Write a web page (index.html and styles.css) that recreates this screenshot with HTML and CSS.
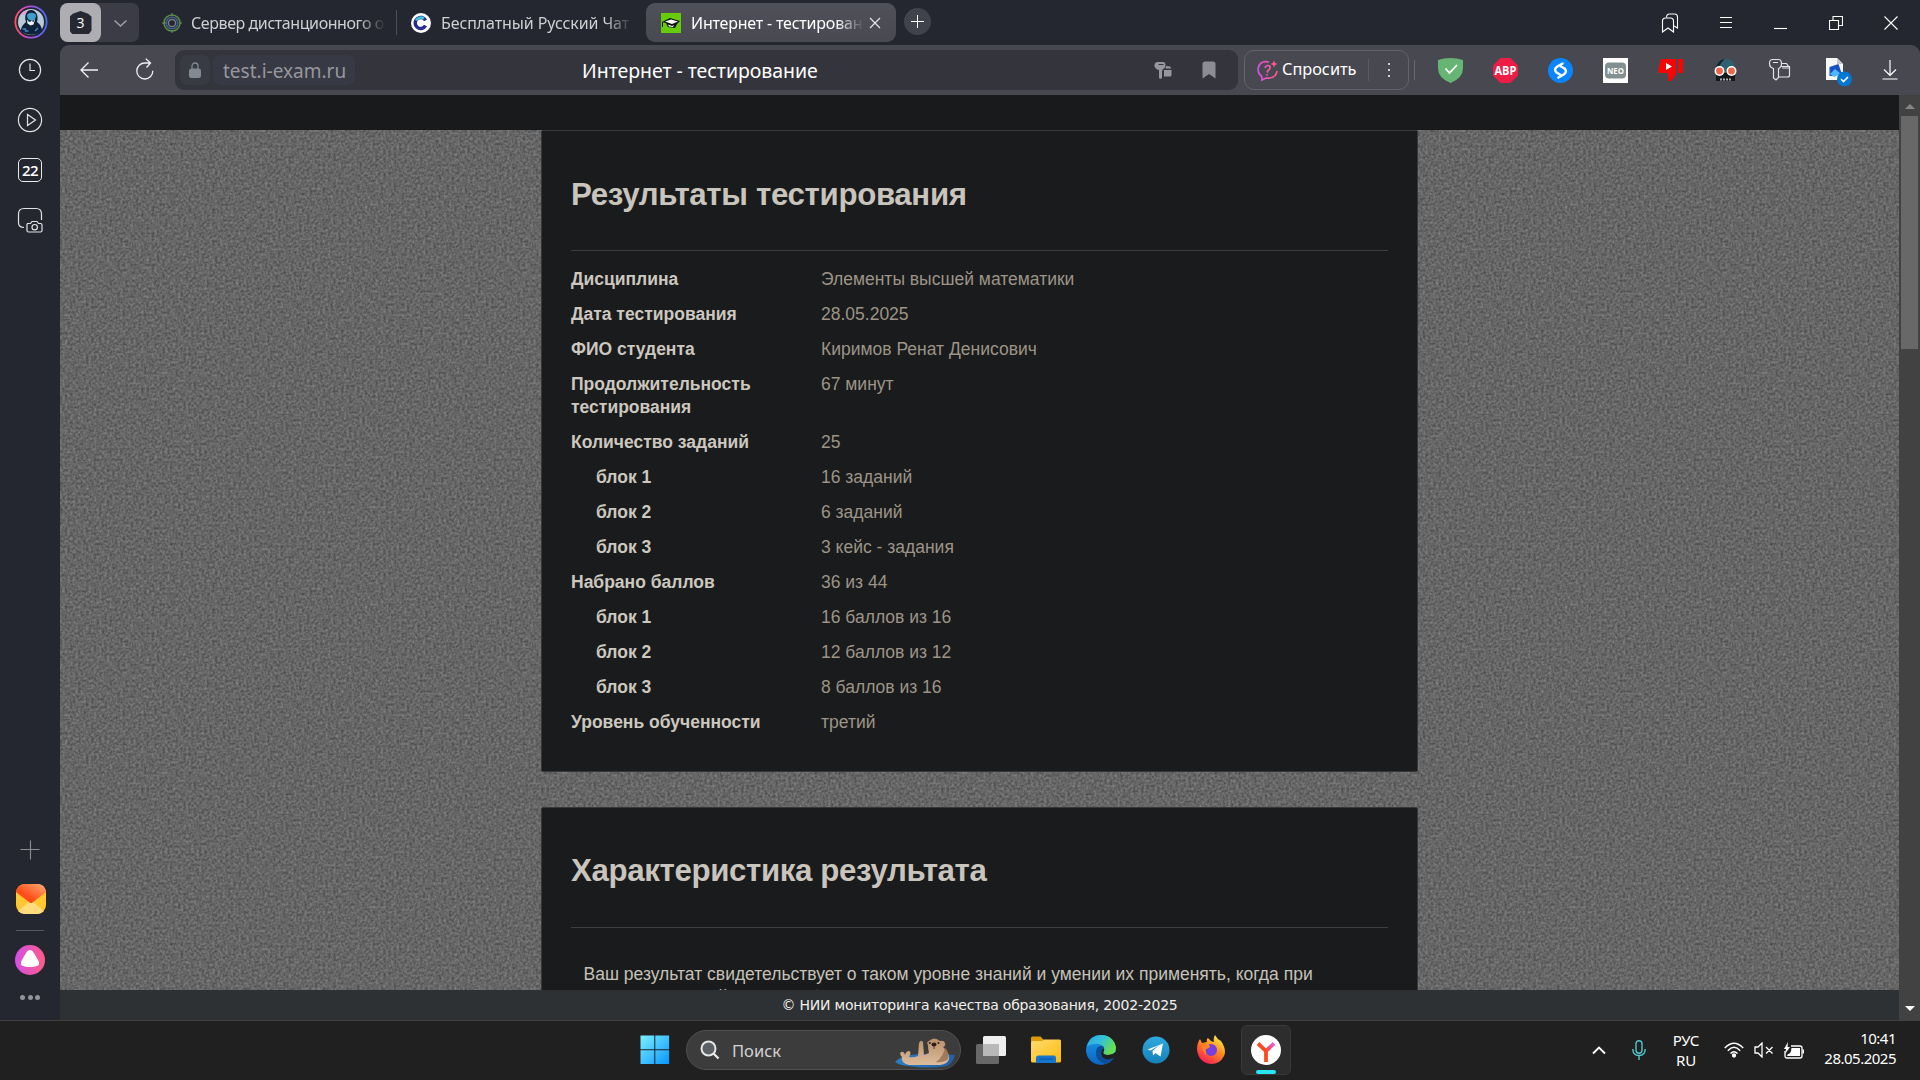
FILE: index.html
```html
<!DOCTYPE html>
<html lang="ru">
<head>
<meta charset="utf-8">
<title>Интернет - тестирование</title>
<link rel="stylesheet" href="styles.css">
</head>
<body>
<svg class="defs" width="0" height="0"><defs>
<linearGradient id="ring" x1="0" y1="0" x2="1" y2="0"><stop offset="0" stop-color="#ff5263"/><stop offset=".4" stop-color="#c04bd8"/><stop offset="1" stop-color="#416dff"/></linearGradient>
<linearGradient id="pink" x1="0" y1="0" x2="1" y2="0"><stop offset="0" stop-color="#d44fe8"/><stop offset="1" stop-color="#ff5c86"/></linearGradient>
<linearGradient id="mail" x1="0" y1="1" x2="1" y2="0"><stop offset=".35" stop-color="#ff4b18"/><stop offset="1" stop-color="#ffad74"/></linearGradient>
<linearGradient id="win" x1="0" y1="0" x2="1" y2="1"><stop offset="0" stop-color="#7cf0ff"/><stop offset="1" stop-color="#0795ff"/></linearGradient>
<linearGradient id="folder" x1="0" y1="0" x2="1" y2="1"><stop offset="0" stop-color="#ffdc70"/><stop offset="1" stop-color="#fcb90d"/></linearGradient>
<linearGradient id="edge" x1="0" y1="0" x2="1" y2=".5"><stop offset="0" stop-color="#2aa5e8"/><stop offset=".5" stop-color="#35c1d8"/><stop offset="1" stop-color="#67e04a"/></linearGradient>
<linearGradient id="edge2" x1="0" y1="0" x2="0" y2="1"><stop offset="0" stop-color="#1b9de2"/><stop offset="1" stop-color="#0b63c5"/></linearGradient>
<linearGradient id="tg" x1="0" y1="0" x2="0" y2="1"><stop offset="0" stop-color="#2fa9df"/><stop offset="1" stop-color="#1581b9"/></linearGradient>
<linearGradient id="fox" x1=".8" y1="0" x2=".2" y2="1"><stop offset="0" stop-color="#fff04a"/><stop offset=".45" stop-color="#ff8a1c"/><stop offset="1" stop-color="#f8125f"/></linearGradient>
<linearGradient id="ya" gradientUnits="userSpaceOnUse" x1="8" y1="20" x2="23" y2="8"><stop offset=".4" stop-color="#ff4a1c"/><stop offset="1" stop-color="#e45cf0"/></linearGradient>
<linearGradient id="sea" x1="0" y1="0" x2="1" y2="0"><stop offset="0" stop-color="#2a7fc4"/><stop offset="1" stop-color="#1f5fa8"/></linearGradient>
<linearGradient id="fur" x1="0" y1="0" x2="0" y2="1"><stop offset="0" stop-color="#b98f69"/><stop offset="1" stop-color="#dcbb9b"/></linearGradient>
</defs></svg>
<div class="desktop">
  <div class="browser">
    <aside class="sidebar">
      <svg class="avatar" width="34" height="34" viewBox="0 0 34 34"><circle cx="17" cy="17" r="15.6" fill="#20242e" stroke="url(#ring)" stroke-width="1.8"/><circle cx="17" cy="17" r="13" fill="#b9cbd8"/><path d="M7 26c0-5 3-7 5-9-2-6 0-12 5-12s8 6 6 12c3 2 5 5 5 9-6 5-15 5-21 0z" fill="#11233b"/><path d="M13 10c2-3 7-3 9 0 0 4-2 5-4 6-3-1-5-2-5-6z" fill="#3f9fc9"/><path d="M13 15l3 1.500 5-2-1.500 5-3 1-3-2z" fill="#e8f4f8"/><path d="M14.500 16h2M18.500 16h1.500" stroke="#11233b" stroke-width="1.500"/><path d="M7 10l3-4 3 0-2 4z" fill="#ef9fd7"/><path d="M8.500 24h3v2h3M21 26l3-3" stroke="#3d87c4" fill="none" stroke-width="1.500"/></svg>
      <svg class="side-icon" width="26" height="26" viewBox="0 0 26 26"><circle cx="13" cy="13" r="10.6"/><path d="M13 6.500v7h5"/></svg>
      <svg class="side-icon" width="26" height="26" viewBox="0 0 26 26"><circle cx="13" cy="13" r="11.600"/><path d="M10.500 7.500v11l8-5.500z"/></svg>
      <div class="calendar">22</div>
      <svg class="side-icon" width="26" height="26" viewBox="0 0 26 26"><path d="M7 20.500C3 20.500 1.500 19 1.500 15.500V7c0-4 1.500-5.500 5.500-5.500h12c4 0 5.500 1.500 5.500 5.500v6"/><path d="M10.500 16.500h3l1.500-2h5l1.500 2h2c1 0 1.500.5 1.500 1.500v5.500c0 1-.5 1.500-1.500 1.500h-12c-1 0-1.500-.5-1.500-1.500v-6z"/><circle cx="17.700" cy="20.200" r="2.700"/></svg>
      <span class="side-space"></span>
      <svg class="side-plus" width="20" height="20" viewBox="0 0 20 20"><path d="M10.500 .5v19M.5 9.500h19"/></svg>
      <svg class="side-mail" width="30" height="30" viewBox="0 0 30 30"><rect width="30" height="30" rx="9" fill="#ffc831"/><path d="M2 27L15 16l13 11a9 9 0 0 1-7 3H9a9 9 0 0 1-7-3z" fill="#ffdc7c"/><path d="M0 8C1 2 5 0 9 0h12c5 0 8 2 9 8L16.500 18.500q-1.500 1-3 0z" fill="url(#mail)"/></svg>
      <span class="side-rule"></span>
      <svg class="side-alice" width="30" height="30" viewBox="0 0 30 30"><circle cx="15" cy="15" r="15" fill="url(#pink)"/><path d="M15 5c3 0 5 5 8 10 3 5 0 7-8 7s-11-2-8-7c3-5 5-10 8-10z" fill="#fff"/></svg>
      <span class="side-dots"><i></i><i></i><i></i></span>
    </aside>
    <div class="main">
      <div class="tabs">
        <div class="group"><span class="count"><b>3</b></span><svg width="38" height="38" viewBox="0 0 38 38"><path d="M13.500 16.500l6 5.500 6-5.500" fill="none" stroke="#a0a0a8" stroke-width="1.500"/></svg></div>
        <div class="tab tab-first">
          <svg width="20" height="20" viewBox="0 0 20 20" fill="none"><circle cx="10" cy="10" r="8" stroke="#5d8f43" stroke-width="1.500"/><circle cx="10" cy="10" r="5.800" stroke="#3f5e8a" stroke-width="1.500"/><circle cx="10" cy="10" r="3.600" stroke="#777d85" stroke-width="1.500"/><path d="M0 10h4M10 0v3M10 17v3M18 10h2" stroke="#6a8a68"/></svg>
          <span class="label l1">Сервер дистанционного о</span>
        </div>
        <div class="tab tab-second">
          <svg width="20" height="20" viewBox="0 0 20 20"><circle cx="10" cy="10" r="10" fill="#fff"/><path d="M14.500 7.300A5.500 5.500 0 1 0 14.500 12.700" fill="none" stroke="#272c8e" stroke-width="3.500"/><path d="M5 7.500A5.500 5.500 0 0 1 13 5.500" fill="none" stroke="#3fc4d8" stroke-width="2.500"/></svg>
          <span class="label l2">Бесплатный Русский Чат</span>
        </div>
        <div class="tab tab-active">
          <svg width="20" height="20" viewBox="0 0 20 20"><path fill="#66cc0a" d="M0 0h20v20H0z"/><path d="M1 9l8-4 10 3-3 3-2 4-7-1-2-4z" fill="#111"/><path d="M4 8.500l6-2 7 2-6 2.500zM7 11.500l4 1.500 2-1-1 2-4-.5z" fill="#fff"/><path d="M1.500 9v5" stroke="#111"/></svg>
          <span class="label l3">Интернет - тестирование</span>
          <svg class="close" width="12" height="12" viewBox="0 0 12 12"><path d="M1 1l10 10M11 1L1 11" stroke="#e4e4e8" stroke-width="1.200"/></svg>
        </div>
        <span class="newtab"><svg width="13" height="13" viewBox="0 0 13 13"><path d="M6.500 0v13M0 6.500h13" stroke="#fff" stroke-width="1"/></svg></span>
        <div class="window-buttons">
          <svg width="18" height="20" viewBox="0 0 18 20"><path d="M1.500 8q0-3 3-3h5q3 0 3 3v11l-5.500-4-5.500 4z"/><path d="M5.500 4.500q0-3.500 3-3.500h5q3 0 3 3v11l-3.500-2"/></svg>
          <svg width="12" height="12" viewBox="0 0 12 12"><path d="M0 .5h12M0 5.500h12M0 10.500h12"/></svg>
          <svg width="13" height="14" viewBox="0 0 13 14"><path d="M0 12.500h13"/></svg>
          <svg width="14" height="14" viewBox="0 0 14 14"><path d="M.5 4.500h9v9h-9zM4 4V.5h9.500V9.500H10"/></svg>
          <svg width="14" height="14" viewBox="0 0 14 14"><path d="M.5.5l13 13M13.500.5l-13 13"/></svg>
        </div>
      </div>
      <div class="toolbar">
        <svg class="nav back" width="18" height="16" viewBox="0 0 18 16"><path d="M18 8H1M8.500.5L1 8l7.500 7.500"/></svg>
        <svg class="nav reload" width="18" height="22" viewBox="0 0 18 22"><path d="M16.800 12.800A8 8 0 1 1 9 5h5.500M9.800.8L14.500 5l-4 4.500"/></svg>
        <div class="address">
          <span class="lock"><svg width="12" height="16" viewBox="0 0 12 16"><path d="M3 8V4a3 3 0 0 1 6 0v4" fill="none" stroke="#838990" stroke-width="1.300"/><rect y="6.500" width="12" height="9.500" rx="2.500" fill="#838990"/></svg></span>
          <span class="host"><span>test.i-exam.ru</span></span>
          <span class="page-title"><span>Интернет - тестирование</span></span>
          <svg width="18" height="18" viewBox="0 0 18 18" fill="#96969d"><path d="M3 1h6q2.500 0 2.500 3T9 8L8 10v7l-1.500 1L5 17V9Q1 8 .5 5T3 1zM4.500 3h5v1h-5z" fill-rule="evenodd"/><path d="M12 5l4 .5 1.500 2h-6zM10 9h7.500v5q0 1.500-1.500 1.500h-6z"/></svg>
          <svg class="bookmark" width="14" height="18" viewBox="0 0 14 18"><path d="M3 .5h8q2.500 0 2.500 2.500v14.500L7 13 .5 17.500V3Q.5.500 3 .5z" fill="#8c8c93"/></svg>
        </div>
        <div class="ask">
          <svg width="21" height="21" viewBox="0 0 21 21" fill="none" stroke="url(#pink)" stroke-width="1.700"><path d="M12 2Q3 0 1.200 8q-.7 5 3.600 8.500L5 20l4-2q10 1 11-7"/><path d="M8 8q.5-2.500 3-2.500T13 8q0 1.500-2 2.500l-1 2M10 14v1.500"/><path d="M17 .5l1 2.500 2.500 1L18 5l-1 2.500L16 5l-2.500-1L16 3z" fill="#ff5c96" stroke="none"/></svg>
          <span class="ask-label">Спросить</span><i class="ask-rule"></i>
          <span class="kebab"><i></i><i></i><i></i></span>
        </div>
        <i class="tool-rule"></i>
        <div class="extensions">
          <svg width="25" height="25" viewBox="0 0 25 25"><path d="M0 2Q12.500-2 25 2v8q0 10-12.500 15Q0 20 0 10z" fill="#66b574"/><path d="M7.500 10.500l4 4.500L19 7" fill="none" stroke="#fff" stroke-width="1.800"/></svg>
          <svg width="25" height="25" viewBox="0 0 25 25"><path d="M7.500 0h10L25 7.500v10L17.500 25h-10L0 17.500v-10z" fill="#ed1e45"/><text x="12.500" y="17" class="abp" text-anchor="middle" textLength="22" lengthAdjust="spacingAndGlyphs">ABP</text></svg>
          <svg width="25" height="25" viewBox="0 0 25 25"><circle cx="12.500" cy="12.500" r="12.500" fill="#0a84ff"/><path d="M14.500 5.500L9 8.800q-3.500 2.700-.5 5.700l3.500 2M10.500 19.500l5.500-3.300q3.500-2.700.5-5.700L13 8.500" fill="none" stroke="#fff" stroke-width="2.500" stroke-linecap="round" stroke-linejoin="round"/></svg>
          <svg width="25" height="25" viewBox="0 0 25 25"><path d="M0 0h25v25H0z" fill="#fff"/><rect x="2" y="4.500" width="21" height="16" rx="4" fill="#829092"/><text x="12.500" y="15.500" class="neo" text-anchor="middle" textLength="17" lengthAdjust="spacingAndGlyphs">NEO</text></svg>
          <svg width="25" height="25" viewBox="0 0 25 25"><path d="M3 1h15v15l-5 7H10v-8H1q-1-1-.5-4zM20 1h5v14h-5z" fill="#f70505"/><path d="M8 5l6 3.500L8 12z" fill="#fff"/></svg>
          <svg width="25" height="25" viewBox="0 0 25 25"><path d="M3 10Q4 1 12.500 1T22 10v4H3z" fill="#2e6270"/><path d="M3 12q0-10 9-11-5 4-6 9z" fill="#17242a"/><path d="M3 15h19v8H3z" fill="#16191b"/><circle cx="6.500" cy="13" r="5" fill="#fff"/><circle cx="18.500" cy="13" r="5" fill="#fff"/><circle cx="6.500" cy="13" r="3.400" fill="#ee6548"/><circle cx="18.500" cy="13" r="3.400" fill="#ee6548"/><path d="M8 20.500v2M11 20.500v2M14 20.500v2M17 20.500v2" stroke="#e7f0f0" stroke-width="1.400"/></svg>
          <svg width="25" height="25" viewBox="0 0 25 25" fill="none" stroke="#e2e2e6" stroke-width="1.200"><path d="M4.500 1.500h6q3 0 3 4t-3 5v9L8 22l-2.500-2v-9.500q-4-1-4-5t3-4zM5 4.500h5M13.500 5.500h5l2 3h-7M14 10h7.500v7q0 2-2 2h-9M21.500 10V8"/></svg>
          <svg width="29" height="31" viewBox="0 0 29 31"><path d="M3 3h11l6 6v16H3z" fill="#f7f7f8"/><path d="M14 3v6h6" fill="#c5c8cc"/><path d="M6.500 12l9-3 3 9-8 3h-4z" fill="#1553c4"/><path d="M7 19l5-5 6 5-7 3z" fill="#51b7ff"/><circle cx="21.500" cy="24" r="7.500" fill="#0078d4"/><path d="M18 24l2.500 2.500L25 22" fill="none" stroke="#fff" stroke-width="1.600"/></svg>
          <svg width="16" height="20" viewBox="0 0 16 20" fill="none" stroke="#fff" stroke-width="1.200"><path d="M8 0v15M2 9.500L8 15.500l6-6M.5 19h15"/></svg>
        </div>
      </div>
      <div class="viewport">
        <div class="page">
          <header class="page-top"></header>
          <main class="scroll">
            <section class="card">
              <h1 class="h-a"><span>Результаты тестирования</span></h1>
              <dl class="facts">
                <dt>Дисциплина</dt><dd>Элементы высшей математики</dd>
                <dt>Дата тестирования</dt><dd>28.05.2025</dd>
                <dt>ФИО студента</dt><dd>Киримов Ренат Денисович</dd>
                <dt>Продолжительность тестирования</dt><dd>67 минут</dd>
                <dt>Количество заданий</dt><dd>25</dd>
                <dt class="sub">блок 1</dt><dd>16 заданий</dd>
                <dt class="sub">блок 2</dt><dd>6 заданий</dd>
                <dt class="sub">блок 3</dt><dd>3 кейс - задания</dd>
                <dt>Набрано баллов</dt><dd>36 из 44</dd>
                <dt class="sub">блок 1</dt><dd>16 баллов из 16</dd>
                <dt class="sub">блок 2</dt><dd>12 баллов из 12</dd>
                <dt class="sub">блок 3</dt><dd>8 баллов из 16</dd>
                <dt>Уровень обученности</dt><dd>третий</dd>
              </dl>
            </section>
            <section class="card card-next">
              <h1 class="h-b"><span>Характеристика результата</span></h1>
              <p class="verdict">Ваш результат свидетельствует о таком уровне знаний и умении их применять, когда при решении заданий Вы способны</p>
            </section>
          </main>
          <footer class="page-foot"><span>© НИИ мониторинга качества образования, 2002-2025</span></footer>
        </div>
        <div class="scrollbar"><i class="up"></i><span class="thumb"></span><i class="down"></i></div>
      </div>
    </div>
  </div>
  <div class="taskbar">
    <div class="apps">
      <svg class="start" width="30" height="30" viewBox="0 0 30 30"><path d="M.5.500h13.800v13.800H.5zM15.300.5h13.800v13.800H15.300zM.5 15.300h13.800v13.800H.5zM15.300 15.300h13.800v13.800H15.300z" fill="url(#win)"/></svg>
      <div class="search">
        <svg width="20" height="20" viewBox="0 0 20 20" fill="none"><circle cx="8.500" cy="8.500" r="7" stroke="#e4e6e8" stroke-width="2" fill="#5a6066"/><path d="M13.500 13.500l5 5" stroke="#e4e6e8" stroke-width="2.400"/></svg>
        <span class="search-label">Поиск</span>
        <svg class="otter" width="60" height="30" viewBox="0 0 60 30"><path d="M0 24q4-4 10-6 20-4 50-1-2 8-8 11-20 3-38 0-8 0-14-4z" fill="url(#sea)"/><path d="M11 26q-5-2-4-7-3-3-1-5 3-1 4 3 1-4 4-4 3 1 0 6 4 1 9-1l1-13q2-4 4-1l1 13 5-2q-1-4-1-8-2-3 1-4 5-5 11 0 4-1 5 2 1 3-2 4 7 6 6 12-1 5-9 6H14z" fill="url(#fur)"/><path d="M50 9q5 6 3 12-5 4-12 3 8-6 9-15z" fill="#8d6546" opacity=".7"/><ellipse cx="39" cy="6.500" rx="2.500" ry="2" fill="#2c2019"/><circle cx="34.800" cy="5" r="1" fill="#2c2019"/><circle cx="43.500" cy="5" r="1" fill="#2c2019"/><path d="M39 8v3" stroke="#573b29"/></svg>
      </div>
      <svg class="taskview" width="30" height="28" viewBox="0 0 30 28"><rect x="0" y="8" width="23" height="20" rx="1.500" fill="#686868"/><rect x="7" y="0" width="23" height="20" rx="1.500" fill="#efefef"/><path d="M7 8h16v12H7z" fill="#b9b9b9"/></svg>
      <svg class="folder" width="30" height="28" viewBox="0 0 30 28"><path d="M0 2q0-1.500 1.500-1.500h8L13 4h15q2 0 2 2v5H0z" fill="#dd9c06"/><path d="M0 6.500Q0 5 2 5h9l2-1.500h15.500Q30 3.500 30 5v20q0 1.500-1.500 1.500h-27Q0 26.500 0 25z" fill="url(#folder)"/><path d="M5 27v-5q0-2.500 2.500-2.500h15Q25 19.500 25 22v5z" fill="#1576cd"/><path d="M8.500 23h13" stroke="#0b4f9e"/></svg>
      <svg class="edge" width="30" height="30" viewBox="0 0 30 30"><circle cx="15" cy="15" r="15" fill="url(#edge2)"/><path d="M1 11Q4 0 15 0q12 0 15 12 0 8-8 8-5 0-5-3 2-3 1-5Q13 6 1 11z" fill="url(#edge)"/><path d="M18 12q-6-3-8 4-1 10 9 13 6-1 9-6-13 3-13-5 0-3 3-6z" fill="#0d4e98"/><path d="M17.500 17q-1 3 4.500 3 5 0 9-4v6l-3 1q-12 4-13-5 0-3 2.500-5 1.500 2 0 4z" fill="#202020"/></svg>
      <svg class="telegram" width="28" height="28" viewBox="0 0 28 28"><circle cx="14" cy="14" r="13.500" fill="url(#tg)"/><path d="M5.500 13.500L21 7.500l-2.500 13-5-3.500-2.500 2.500-.5-4.500 7-6-9 5.500z" fill="#fff"/></svg>
      <svg class="firefox" width="30" height="30" viewBox="0 0 30 30"><path d="M1 15Q1 8 4 4l2 4 5-1q-1-3 1-4 2 3 6 4-1-4 1-7 2 4 6 6 6 9 3 15-4 8-13 8Q3 28 1 15z" fill="url(#fox)"/><circle cx="15" cy="15" r="6" fill="#7540dd"/><path d="M6 10q5-3 8 1 0 2-4 3-1 4 2 6-6-1-6-10z" fill="#ff8421"/></svg>
      <div class="active-app"><svg width="30" height="30" viewBox="0 0 30 30"><circle cx="15" cy="15" r="15" fill="#fff"/><path d="M7 8.500l8 7.500v11M15 16l8-7.500" fill="none" stroke="url(#ya)" stroke-width="3.800"/></svg><i></i></div>
    </div>
    <div class="tray">
      <svg width="14" height="10" viewBox="0 0 14 10"><path d="M1 8.500l6-6 6 6" fill="none" stroke="#fff" stroke-width="1.900"/></svg>
      <svg class="mic" width="14" height="20" viewBox="0 0 14 20" fill="none" stroke="#51c8cf" stroke-width="1.400"><rect x="4" y=".7" width="6" height="12.500" rx="3"/><path d="M.8 9q0 6.500 6.200 6.500T13.200 9M7 15.500V20"/></svg>
      <div class="lang"><span>РУС</span><span>RU</span></div>
      <svg class="wifi" width="20" height="16" viewBox="0 0 20 16" fill="none" stroke="#fff" stroke-width="1.500"><path d="M.8 6Q10-3.500 19.200 6M3.800 8.700Q10 2 16.200 8.700M6.500 11.500Q10 8 13.500 11.500"/><circle cx="10" cy="13.500" r="1.400" fill="#fff"/></svg>
      <svg class="sound" width="20" height="16" viewBox="0 0 20 16" fill="none" stroke="#fff" stroke-width="1.300"><path d="M1 5h3l4-4v14l-4-4H1zM12 5l6.500 6.500M18.500 5L12 11.500"/></svg>
      <svg class="battery" width="21" height="17" viewBox="0 0 21 17"><path d="M7 4h9q2 0 2 2v8q0 2-2 2H3q-2 0-2-2V9" fill="none" stroke="#fff" stroke-width="1.300"/><path d="M7.500 6h8.500v8H3l1-2q3 0 3.500-6zM4 0L0 7h2l-1 5 5-7H3.500zM18.500 7.500h1.500v4h-1.500z" fill="#fff"/></svg>
      <div class="clock"><span>10:41</span><span>28.05.2025</span></div>
    </div>
  </div>
</div>
</body>
</html>
```
FILE: styles.css
```css
* { box-sizing: border-box; }
body { margin: 0; background: #202020; overflow: hidden; font-family: "Noto Sans", "Open Sans", sans-serif; color: #fff; }
svg { display: block; flex: none; }
i { display: block; flex: none; }
.defs { position: absolute; }
.desktop { width: 1920px; height: 1080px; display: flex; flex-direction: column; }
.browser { height: 1020px; display: flex; background: #24272f; }

.sidebar { width: 60px; display: flex; flex-direction: column; align-items: center; padding: 5px 0 20px; }
.avatar { margin: 0 0 18px 1px; }
.side-icon { fill: none; stroke: #e2e3e6; stroke-width: 1.2; margin-bottom: 24px; }
.calendar { width: 24px; height: 24px; border: 1.3px solid #e8e9eb; border-radius: 5px; font: 600 15px/22px "Open Sans", sans-serif; text-align: center; margin: 1px 0 25px; letter-spacing: -.5px; }
.side-space { flex: 1; }
.side-plus { fill: none; stroke: #8b8d93; stroke-width: 1.1; margin-bottom: 24px; }
.side-mail { margin: 0 0 16px 2px; }
.side-rule { width: 28px; height: 1px; background: #54575f; margin-bottom: 14px; }
.side-alice { margin-bottom: 20px; }
.side-dots { display: flex; gap: 2.5px; }
.side-dots i { width: 5px; height: 5px; border-radius: 50%; background: #92949b; }

.main { width: 1860px; display: flex; flex-direction: column; }
.tabs { height: 45px; display: flex; align-items: center; }
.group { display: flex; width: 79px; height: 39px; border-radius: 7px; background: #3b3c46; align-items: center; }
.count { width: 41px; height: 39px; background: #adadb2; border-radius: 8px; display: grid; place-items: center; }
.count b { width: 22px; height: 23px; background: #262932; clip-path: polygon(50% 0, 85% 12%, 100% 25%, 100% 85%, 88% 100%, 12% 100%, 0 85%, 0 25%, 15% 12%); font: 14px/23px "Open Sans", sans-serif; text-align: center; }
.tab { display: flex; align-items: center; height: 39px; }
.label { overflow: hidden; white-space: nowrap; font-size: 16px; line-height: 24px; margin-left: 10px; color: #cfcfd3; letter-spacing: -.42px; -webkit-mask-image: linear-gradient(90deg, #000 calc(100% - 28px), transparent); mask-image: linear-gradient(90deg, #000 calc(100% - 28px), transparent); }
.tab-first { width: 234px; margin-left: 23px; }
.tab-first .label { width: 195px; margin-left: 9px; }
.tab-second { width: 251px; padding-left: 15px; }
.tab-second::before { content: ""; width: 1px; height: 25px; background: #4c4e57; margin-left: -15px; margin-right: 14px; }
.tab-second .label { width: 192px; letter-spacing: -.1px; }
.tab-active { width: 250px; margin-left: -1px; padding: 0 15px; border-radius: 9px; background: linear-gradient(#50505a, #494952); }
.tab-active .label { width: 174px; color: #fff; letter-spacing: -.2px; }
.close { margin-left: 5px; }
.newtab { width: 27px; height: 27px; border-radius: 50%; background: #41434c; display: grid; place-items: center; margin: -2px 0 0 8px; }
.window-buttons { margin-left: auto; display: flex; align-items: center; padding-right: 22px; gap: 41px; }
.window-buttons svg { fill: none; stroke: #fff; stroke-width: 1.1; }
.window-buttons svg:nth-child(n+3) { margin-left: 1px; }
.window-buttons svg:last-child { margin-left: 0; }

.toolbar { height: 50px; background: #484851; border-radius: 9px 9px 0 0; display: flex; align-items: center; }
.nav { fill: none; stroke: #f1f1f3; stroke-width: 1.3; }
.back { margin-left: 20px; }
.reload { margin: -3px 0 0 38px; }
.address { width: 1063px; height: 40px; margin-left: 21px; border-radius: 9px; background: #34343d; display: flex; align-items: center; padding: 0 22px 0 5px; }
.lock { width: 30px; height: 30px; border-radius: 7px; background: #383a44; display: grid; place-items: center; }
.host { width: 142px; height: 30px; border-radius: 7px; background: #373944; margin-left: 3px; padding-left: 10px; font-size: 19px; line-height: 33px; color: #97979e; }
.page-title { flex: 1; padding-left: 227px; font-size: 19.500px; line-height: 33px; white-space: nowrap; letter-spacing: -.04px; }
.bookmark { margin-left: 30px; }
.ask { width: 165px; height: 40px; margin-left: 6px; border: 1px solid #63636c; border-radius: 10px; display: flex; align-items: center; padding-left: 12px; }
.ask-label { width: 75px; margin: -3px 0 0 4px; font-size: 16.300px; line-height: 24px; letter-spacing: 0; }
.ask-rule { width: 1px; height: 22px; background: #5b5b64; margin-left: 11px; }
.kebab { display: grid; gap: 4px; margin-left: 19px; }
.kebab i { width: 2px; height: 2px; background: #d0d0d4; }
.tool-rule { width: 1px; height: 20px; background: #686871; margin-left: 5px; }
.extensions { display: flex; align-items: center; gap: 30px; margin-left: 23px; }
.abp { font: bold 12px "Open Sans", sans-serif; fill: #fff; }
.neo { font: bold 8px "Open Sans", sans-serif; fill: #fff; }

.viewport { height: 925px; display: flex; }
.page { width: 1839px; display: flex; flex-direction: column; font-family: "Liberation Sans", Arial, sans-serif; }
.page-top { height: 35px; background: #191a1c; flex: none; }
.scroll { height: 860px; overflow: hidden; background: #666 url("data:image/svg+xml,%3Csvg xmlns='http://www.w3.org/2000/svg' width='400' height='400'%3E%3Cfilter id='n' x='0' y='0' width='100%25' height='100%25' color-interpolation-filters='sRGB'%3E%3CfeTurbulence type='fractalNoise' baseFrequency='.38' numOctaves='2' seed='4' stitchTiles='stitch'/%3E%3CfeColorMatrix values='.3 0 0 0 .25 .3 0 0 0 .25 .3 0 0 0 .25 0 0 0 0 1'/%3E%3C/filter%3E%3Crect width='400' height='400' filter='url(%23n)'/%3E%3C/svg%3E"); }
.card { width: 877px; height: 642px; margin-left: 481px; padding: 0 29px; border: 1px solid #34383b; border-radius: 2px; background: #191b1c; }
.card-next { margin-top: 35px; }
.card h1 { height: 120px; margin: 0; padding-top: 43px; border-bottom: 1px solid #3a3f41; font-size: 31.250px; line-height: 40px; letter-spacing: -.37px; color: #c9c4bc; white-space: nowrap; }
.card .h-a { padding-top: 44px; letter-spacing: -.35px; }
.facts { display: grid; grid-template-columns: 250px 1fr; margin: 11px 0 0; font-size: 17.500px; line-height: 23px; }
.facts dt, .facts dd { margin: 0; padding: 6px 30px 6px 0; }
.facts dt { font-weight: bold; color: #ccc7bf; }
.facts dd { color: #9d9487; }
.facts .sub { padding-left: 25px; }
.verdict { margin: 35px 0 0; padding: 0 40px 0 12.500px; font-size: 17.500px; line-height: 23px; color: #c6c1b8; }
.page-foot { height: 30px; flex: none; background: #2d3134; text-align: center; font: 14px/31px "DejaVu Sans", Verdana, sans-serif; letter-spacing: -.21px; color: #f2efea; }
.scrollbar { width: 21px; background: #424242; display: flex; flex-direction: column; align-items: center; padding: 9px 0 9px; }
.up { border: 5px solid transparent; border-top: 0; border-bottom-color: #868686; }
.thumb { width: 17px; height: 233px; margin-top: 7px; background: #686868; }
.down { margin-top: auto; border: 5px solid transparent; border-bottom: 0; border-top-color: #fff; }

.taskbar { height: 60px; background: #202020; border-top: 1px solid #424242; display: flex; align-items: flex-start; }
.apps { display: flex; align-items: center; margin-left: 640px; height: 58px; }
.search { width: 275px; height: 40px; margin-left: 16px; border: 1px solid #505050; border-radius: 20px; background: #3c3c3c; display: flex; align-items: center; padding-left: 13px; }
.search-label { width: 60px; margin-left: 12px; font-size: 16.500px; color: #d2d2d2; }
.otter { margin: 5px 0 0 103px; }
.taskview { margin-left: 15px; }
.folder { margin-left: 25px; }
.edge { margin-left: 25px; }
.telegram { margin-left: 26px; }
.firefox { margin-left: 26px; }
.active-app { width: 50px; height: 50px; margin-left: 15px; border: 1px solid #393939; border-radius: 6px; background: #2d2d2d; display: flex; flex-direction: column; align-items: center; padding-top: 9px; gap: 5px; }
.active-app i { width: 20px; height: 4px; border-radius: 2px; background: #27e5f5; }
.tray { margin-left: auto; display: flex; align-items: center; padding-right: 24px; height: 58px; }
.mic { margin-left: 26px; }
.lang, .clock { display: flex; flex-direction: column; font-size: 15px; line-height: 20px; }
.lang { width: 40px; margin: -1px 0 0 20px; align-items: center; letter-spacing: -.2px; }
.wifi { margin-left: 18px; }
.sound { margin-left: 10px; }
.battery { margin-left: 10px; }
.clock { width: 80px; margin: -4px 0 0 11px; align-items: flex-end; letter-spacing: -.5px; }
```
